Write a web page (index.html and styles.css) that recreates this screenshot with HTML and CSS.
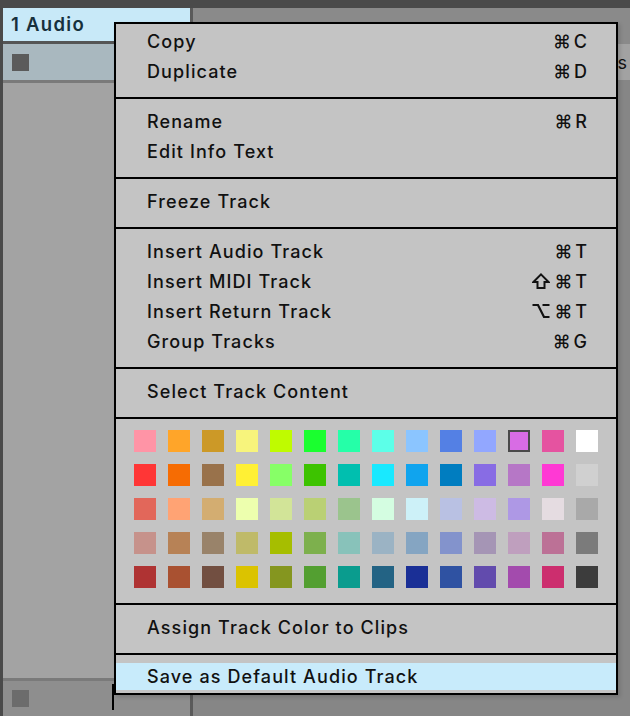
FILE: index.html
```html
<!DOCTYPE html>
<html>
<head>
<meta charset="utf-8">
<link rel="stylesheet" href="styles.css">
</head>
<body>
<div class="app">
  <div class="topbar"></div>
  <div class="main">
    <div class="track-col">
      <div class="track-header"><span class="track-name">1 Audio</span></div>
      <div class="hline"></div>
      <div class="lane"><span class="sq"></span></div>
      <div class="hline light"></div>
      <div class="track-body"></div>
      <div class="hline light"></div>
      <div class="bottom-bar"><span class="sq sq-light"></span></div>
    </div>
    <div class="vdivider"></div>
    <div class="right-col">
      <div class="right-top"></div>
      <div class="right-strip"><span class="strip-text">s</span></div>
      <div class="right-body"></div>
    </div>
  </div>

  <div class="menu">
    <div class="section first">
      <div class="item"><span>Copy</span><span class="kbd">⌘C</span></div>
      <div class="item"><span>Duplicate</span><span class="kbd">⌘D</span></div>
    </div>
    <div class="sep"></div>
    <div class="section">
      <div class="item"><span>Rename</span><span class="kbd">⌘R</span></div>
      <div class="item"><span>Edit Info Text</span></div>
    </div>
    <div class="sep"></div>
    <div class="section">
      <div class="item"><span>Freeze Track</span></div>
    </div>
    <div class="sep"></div>
    <div class="section">
      <div class="item"><span>Insert Audio Track</span><span class="kbd">⌘T</span></div>
      <div class="item"><span>Insert MIDI Track</span><span class="kbd"><svg class="mod" width="18" height="16" viewBox="0 0 18 16"><path d="M9 1.4 L16.6 9 H12.5 V15 H5.5 V9 H1.4 Z" fill="none" stroke="#111" stroke-width="2" stroke-linejoin="miter"/></svg>⌘T</span></div>
      <div class="item"><span>Insert Return Track</span><span class="kbd"><svg class="mod" width="18" height="16" viewBox="0 0 18 16"><path d="M0.5 2 H6 L12 14 H17.5 M10.5 2 H17.5" fill="none" stroke="#111" stroke-width="2.2"/></svg>⌘T</span></div>
      <div class="item"><span>Group Tracks</span><span class="kbd">⌘G</span></div>
    </div>
    <div class="sep"></div>
    <div class="section">
      <div class="item"><span>Select Track Content</span></div>
    </div>
    <div class="sep"></div>
    <div class="grid">
      <span class="sw" style="background:#ff94a6"></span>
      <span class="sw" style="background:#ffa529"></span>
      <span class="sw" style="background:#cc9927"></span>
      <span class="sw" style="background:#f7f47c"></span>
      <span class="sw" style="background:#bffb00"></span>
      <span class="sw" style="background:#1aff2f"></span>
      <span class="sw" style="background:#25ffa8"></span>
      <span class="sw" style="background:#5cffe8"></span>
      <span class="sw" style="background:#8bc5ff"></span>
      <span class="sw" style="background:#5480e4"></span>
      <span class="sw" style="background:#92a7ff"></span>
      <span class="sw selected" style="background:#d86ce4"></span>
      <span class="sw" style="background:#e553a0"></span>
      <span class="sw" style="background:#ffffff"></span>

      <span class="sw" style="background:#ff3636"></span>
      <span class="sw" style="background:#f66c03"></span>
      <span class="sw" style="background:#99724b"></span>
      <span class="sw" style="background:#fff034"></span>
      <span class="sw" style="background:#87ff67"></span>
      <span class="sw" style="background:#3dc300"></span>
      <span class="sw" style="background:#00bfaf"></span>
      <span class="sw" style="background:#19e9ff"></span>
      <span class="sw" style="background:#10a4ee"></span>
      <span class="sw" style="background:#007dc0"></span>
      <span class="sw" style="background:#886ce4"></span>
      <span class="sw" style="background:#b677c6"></span>
      <span class="sw" style="background:#ff39d4"></span>
      <span class="sw" style="background:#d0d0d0"></span>

      <span class="sw" style="background:#e2675a"></span>
      <span class="sw" style="background:#ffa374"></span>
      <span class="sw" style="background:#d3ad71"></span>
      <span class="sw" style="background:#edffae"></span>
      <span class="sw" style="background:#d2e498"></span>
      <span class="sw" style="background:#bad074"></span>
      <span class="sw" style="background:#9bc48d"></span>
      <span class="sw" style="background:#d4fde1"></span>
      <span class="sw" style="background:#cdf1f8"></span>
      <span class="sw" style="background:#b9c1e3"></span>
      <span class="sw" style="background:#cdbbe4"></span>
      <span class="sw" style="background:#ae98e5"></span>
      <span class="sw" style="background:#e5dce1"></span>
      <span class="sw" style="background:#a9a9a9"></span>

      <span class="sw" style="background:#c6928b"></span>
      <span class="sw" style="background:#b78256"></span>
      <span class="sw" style="background:#99836a"></span>
      <span class="sw" style="background:#bfba69"></span>
      <span class="sw" style="background:#a6be00"></span>
      <span class="sw" style="background:#7db04d"></span>
      <span class="sw" style="background:#88c2ba"></span>
      <span class="sw" style="background:#9bb3c4"></span>
      <span class="sw" style="background:#85a5c2"></span>
      <span class="sw" style="background:#8393cc"></span>
      <span class="sw" style="background:#a595b5"></span>
      <span class="sw" style="background:#bf9fbe"></span>
      <span class="sw" style="background:#bc7196"></span>
      <span class="sw" style="background:#7b7b7b"></span>

      <span class="sw" style="background:#af3333"></span>
      <span class="sw" style="background:#a95131"></span>
      <span class="sw" style="background:#724f41"></span>
      <span class="sw" style="background:#dbc300"></span>
      <span class="sw" style="background:#85961f"></span>
      <span class="sw" style="background:#539f31"></span>
      <span class="sw" style="background:#0a9c8e"></span>
      <span class="sw" style="background:#236384"></span>
      <span class="sw" style="background:#1a2f96"></span>
      <span class="sw" style="background:#2f52a2"></span>
      <span class="sw" style="background:#624bad"></span>
      <span class="sw" style="background:#a34bad"></span>
      <span class="sw" style="background:#cc2e6e"></span>
      <span class="sw" style="background:#3c3c3c"></span>
    </div>
    <div class="sep"></div>
    <div class="section">
      <div class="item"><span>Assign Track Color to Clips</span></div>
    </div>
    <div class="sep"></div>
    <div class="section last">
      <div class="item hl"><span>Save as Default Audio Track</span></div>
    </div>
  </div>
  <div class="cursor-line"></div>
</div>
</body>
</html>
```

FILE: styles.css
```css
* { box-sizing: border-box; }
html, body { margin: 0; padding: 0; }
body {
  width: 630px;
  height: 716px;
  overflow: hidden;
  background: #4a4a4a;
  font-family: Inter, "Open Sans", "Liberation Sans", sans-serif;
}
.app {
  position: relative;
  width: 630px;
  height: 716px;
  display: flex;
  flex-direction: column;
}
.topbar { height: 8px; background: #4a4a4a; flex: none; }
.main { flex: 1; display: flex; }
.track-col {
  width: 187px;
  margin-left: 3px;
  display: flex;
  flex-direction: column;
}
.track-header {
  height: 33px;
  background: #c8e9f8;
  display: flex;
  align-items: center;
  padding-left: 8px;
  padding-bottom: 2px;
}
.track-name {
  font-size: 18.5px;
  font-weight: 600;
  letter-spacing: 1.3px;
  color: #17303c;
}
.hline { height: 3px; background: #555; flex: none; }
.hline.light { background: #7a7a7a; }
.lane {
  height: 36px;
  background: #a9b8bf;
  display: flex;
  align-items: center;
  padding-left: 9px;
}
.sq { width: 17px; height: 17px; background: #5b5b5b; display: block; }
.sq-light { background: #6c6c6c; }
.track-body { flex: 1; background: #a3a3a3; }
.bottom-bar {
  height: 35px;
  background: #8e8e8e;
  display: flex;
  align-items: center;
  padding-left: 9px;
}
.vdivider { width: 3px; background: #5a5a5a; }
.right-col { flex: 1; display: flex; flex-direction: column; }
.right-top { height: 36px; background: #8a8a8a; }
.right-strip {
  height: 36px;
  background: #a2a2a2;
  display: flex;
  align-items: center;
  justify-content: flex-end;
  padding-right: 3px;
}
.strip-text { font-size: 18px; color: #111; }
.right-body { flex: 1; background: #868686; }

.menu {
  position: absolute;
  left: 114px;
  top: 22px;
  width: 504px;
  border: 2px solid #000;
  background: #c4c4c4;
  box-shadow: 2px 2px 4px rgba(0,0,0,0.15);
  color: #111;
}
.section { padding: 9px 0; }
.section.first { padding: 4px 0 9px; }
.section.last { padding: 8px 0 3px; }
.sep { height: 2px; background: #000; }
.item {
  height: 30px;
  display: flex;
  align-items: center;
  justify-content: space-between;
  padding: 0 29px 4px 31px;
  font-size: 18px;
  font-weight: 500;
  letter-spacing: 1.1px;
}
.item.hl { height: 27px; padding-bottom: 0; background: #c8ebfb; }
.kbd {
  display: flex;
  align-items: center;
  letter-spacing: 3px;
  margin-right: -3px;
}
.mod { display: block; margin-right: 4px; }
.grid {
  padding: 11px 18px 15px;
  display: grid;
  grid-template-columns: repeat(14, 22px);
  grid-auto-rows: 22px;
  column-gap: 12px;
  row-gap: 12px;
}
.sw { display: block; width: 22px; height: 22px; }
.sw.selected { border: 2px solid #4a4a4a; }
.cursor-line {
  position: absolute;
  left: 112px;
  top: 684px;
  width: 2px;
  height: 26px;
  background: #000;
}
```
